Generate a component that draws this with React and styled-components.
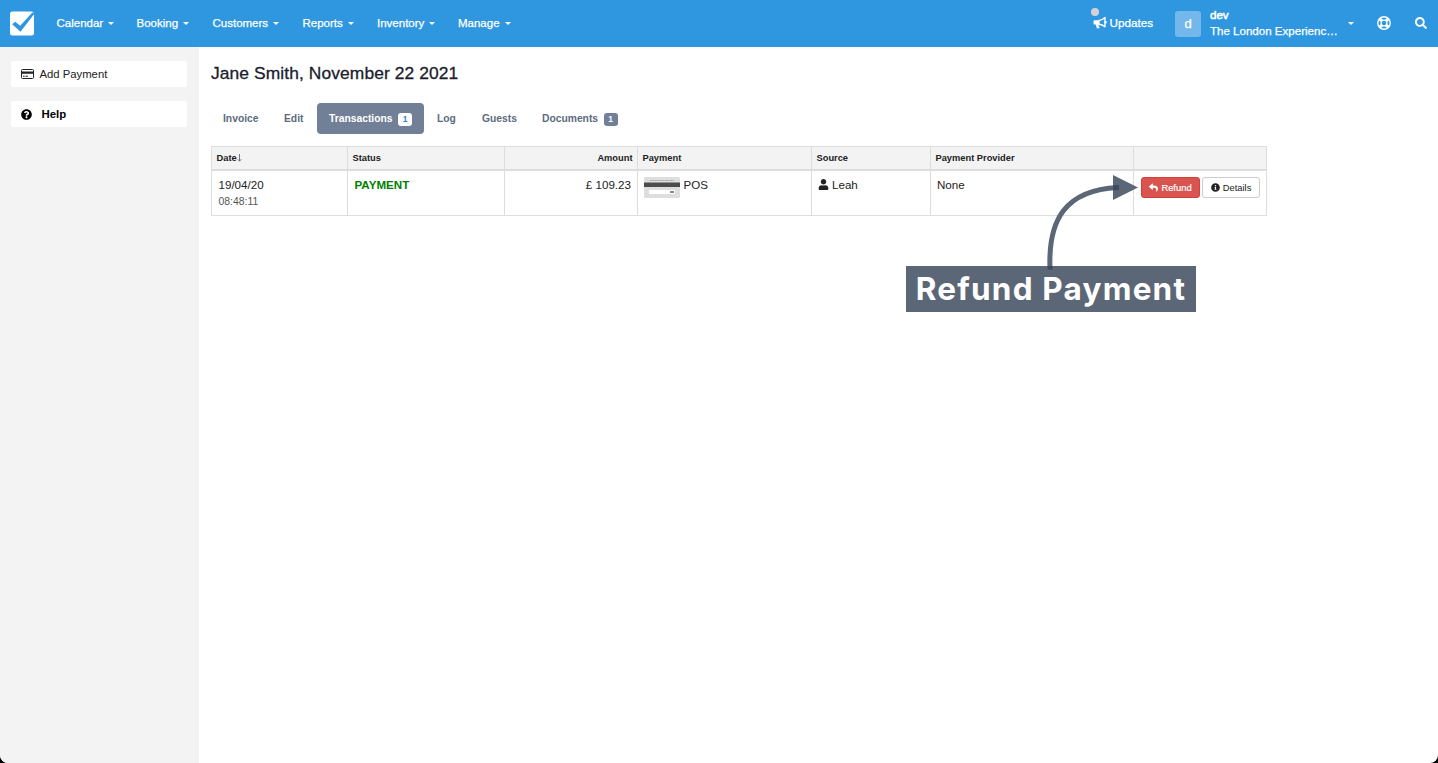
import React from "react";
import styled, { createGlobalStyle } from "styled-components";
import {
  FaInfoCircle,
  FaQuestionCircle,
  FaReply,
  FaSearch,
  FaUser,
} from "react-icons/fa";

const GlobalStyle = createGlobalStyle`
  * {
    box-sizing: border-box;
  }
  body {
    margin: 0;
    background: #000;
    color: #222;
    font-family: "Liberation Sans", Arial, sans-serif;
    font-size: 11.4px;
  }
  svg {
    display: block;
    flex-shrink: 0;
  }
`;

const Page = styled.div`
  position: relative;
  display: flex;
  flex-direction: column;
  width: 100%;
  height: 100vh;
  overflow: hidden;
  background: #fff;
  border-radius: 0 0 8px 8px;
`;

const Navbar = styled.header`
  display: flex;
  align-items: center;
  height: 47px;
  padding: 0 11px 0 10px;
  background: #2f97e0;
  color: #fff;
  -webkit-text-stroke: 0.25px #fff;
`;

const Logo = styled.svg`
  width: 25px;
  height: 25px;
`;

const Menu = styled.nav`
  display: flex;
  margin-left: 21.5px;
  padding-bottom: 2px;
`;

const MenuItem = styled.a`
  display: flex;
  align-items: center;
  width: ${(props) => props.$width}px;
  font-size: 11.5px;
  line-height: 16px;
`;

const Caret = styled.span`
  margin-left: ${(props) => props.$gap || 5}px;
  margin-top: ${(props) => (props.$gap ? 0 : 2)}px;
  border: 3px solid transparent;
  border-top-color: #fff;
  border-bottom: 0;
`;

const NavRight = styled.div`
  display: flex;
  align-items: center;
  margin-left: auto;
`;

const Updates = styled.a`
  position: relative;
  display: flex;
  align-items: center;
  gap: 2.5px;
  padding-bottom: 2px;
  font-size: 11.7px;
`;

const UpdateDot = styled.span`
  position: absolute;
  top: -8px;
  left: -2px;
  width: 8px;
  height: 8px;
  border-radius: 50%;
  background: #d2d2d4;
`;

const Avatar = styled.span`
  width: 26px;
  height: 26px;
  margin-left: 22px;
  border-radius: 3px;
  background: #74b8eb;
  font-size: 13px;
  line-height: 26px;
  text-align: center;
`;

const Account = styled.div`
  display: flex;
  flex-direction: column;
  width: 128px;
  margin-left: 9px;
  padding-bottom: 2px;
  font-size: 11.55px;
  line-height: 16px;
  white-space: nowrap;
`;

const UserName = styled.span`
  -webkit-text-stroke: 0.55px #fff;
`;

const LifeRingSlot = styled.span`
  margin: 0 0 1px 23px;
`;

const SearchSlot = styled.span`
  margin: 0 0 2px 24px;
`;

const Body = styled.div`
  display: flex;
  flex: 1;
`;

const Sidebar = styled.aside`
  display: flex;
  flex-direction: column;
  gap: 14px;
  width: 199px;
  padding: 14px 12px 0 11px;
  background: #f3f3f3;
`;

const SideButton = styled.a`
  display: flex;
  align-items: center;
  gap: ${(props) => (props.$bold ? 9.5 : 5.5)}px;
  height: 26px;
  padding-left: 10px;
  border-radius: 3px;
  background: #fff;
  color: ${(props) => (props.$bold ? "#000" : "#222")};
  font-size: ${(props) => (props.$bold ? 11.4 : 11.3)}px;
  font-weight: ${(props) => (props.$bold ? "bold" : "normal")};
`;

const Main = styled.main`
  flex: 1;
  padding: 14px 0 0 12px;
`;

const Title = styled.h1`
  margin: 0;
  color: #1a202c;
  font-size: 17.4px;
  font-weight: normal;
  line-height: 24px;
  letter-spacing: 0.1px;
  -webkit-text-stroke: 0.3px #1a202c;
`;

const Tabs = styled.div`
  display: flex;
  gap: 1px;
  margin-top: 18px;
`;

const Tab = styled.a`
  display: flex;
  align-items: center;
  width: ${(props) => props.$width}px;
  height: 31px;
  padding-left: 12px;
  border-radius: 4px;
  background: ${(props) => (props.$active ? "#718096" : "transparent")};
  color: ${(props) => (props.$active ? "#fff" : "#5c6b80")};
  font-size: 10.3px;
  font-weight: bold;
`;

const Badge = styled.span`
  width: 14px;
  height: 13px;
  margin: 2px 0 0 5.5px;
  border-radius: 3px;
  background: ${(props) => (props.$active ? "#fff" : "#718096")};
  color: ${(props) => (props.$active ? "#3182ce" : "#fff")};
  font-size: 8.4px;
  line-height: 13px;
  text-align: center;
`;

const Table = styled.div`
  display: grid;
  grid-template-columns: 136px 157px 133px 174px 119px 203px 133px;
  width: 1056px;
  margin-top: 12px;
  border-right: 1px solid #ddd;
`;

const HeadCell = styled.div`
  height: 25px;
  padding: 0 4.5px;
  border: solid #ddd;
  border-width: 1px 0 2px 1px;
  background: #f3f3f3;
  color: #222;
  font-size: 9.3px;
  font-weight: bold;
  line-height: 22px;
  text-align: ${(props) => props.$align || "left"};
`;

const SortArrow = styled.svg`
  display: inline-block;
  width: 5px;
  height: 8px;
  vertical-align: -1px;
`;

const Cell = styled.div`
  display: flex;
  align-items: flex-start;
  justify-content: ${(props) => (props.$align === "right" ? "flex-end" : "flex-start")};
  gap: ${(props) => props.$gap || 0}px;
  height: 45px;
  padding: 6px 6px 0 ${(props) => props.$indent || 6}px;
  border: solid #ddd;
  border-width: 0 0 1px 1px;
  font-size: 11.6px;
  line-height: 16px;
`;

const Time = styled.div`
  color: #555;
  font-size: 10.4px;
  line-height: 17px;
`;

const Status = styled.strong`
  color: #008000;
`;

const UserSlot = styled.span`
  margin-top: 2px;
`;

const Button = styled.button`
  display: flex;
  align-items: center;
  justify-content: center;
  gap: 3px;
  width: ${(props) => (props.$danger ? 59 : 58)}px;
  height: 21px;
  padding: 0;
  border: 1px solid ${(props) => (props.$danger ? "#d43f3a" : "#ccc")};
  border-radius: 3px;
  background: ${(props) => (props.$danger ? "#d9534f" : "#fff")};
  color: ${(props) => (props.$danger ? "#fff" : "#222")};
  font-family: inherit;
  font-size: 9.4px;
  -webkit-text-stroke: ${(props) => (props.$danger ? "0.2px #fff" : "0")};
`;

const Callout = styled.div`
  position: absolute;
  top: 266px;
  left: 906px;
  width: 290px;
  height: 46px;
  background: #5b6777;
  color: #fff;
  font-family: Inter, sans-serif;
  font-size: 31.5px;
  font-weight: 700;
  line-height: 45px;
  letter-spacing: 1.2px;
  text-align: center;
  white-space: nowrap;
`;

const CalloutArrow = styled.svg`
  position: absolute;
  top: 170px;
  left: 1040px;
  width: 105px;
  height: 102px;
`;

const menuItems = [
  { label: "Calendar", width: 80 },
  { label: "Booking", width: 76 },
  { label: "Customers", width: 90 },
  { label: "Reports", width: 74.5 },
  { label: "Inventory", width: 81 },
  { label: "Manage", width: 70 },
];

const tabs = [
  { label: "Invoice", width: 60 },
  { label: "Edit", width: 44 },
  { label: "Transactions", width: 107, count: 1, active: true },
  { label: "Log", width: 44 },
  { label: "Guests", width: 59 },
  { label: "Documents", width: 100, count: 1 },
];

function BullhornIcon() {
  return (
    <svg width="14" height="13" viewBox="0 0 14 13">
      <path d="M1.500 4.200H6v4.300H1.500Q.5 8.500.5 7.500V5.200Q.5 4.200 1.500 4.200zM2.700 8.300h2.600l.4 2 1.100 1.500Q5 13 3.700 12z" fill="currentColor" />
      <path d="M6 4.500Q9.300 4.300 12 1.600v9.200Q9.300 8.300 6 8.200z" fill="none" stroke="currentColor" strokeWidth="1.400" strokeLinejoin="round" />
      <circle cx="12.600" cy="6.200" r="1.200" fill="currentColor" />
    </svg>
  );
}

function LifeRingIcon() {
  return (
    <svg width="14" height="14" viewBox="0 0 14 14" fill="none" stroke="currentColor">
      <circle cx="7" cy="7" r="6.2" strokeWidth="1.4" />
      <circle cx="7" cy="7" r="2.9" strokeWidth="1.3" />
      <path d="M2.6 2.6l2.3 2.3M9.1 9.1l2.3 2.3M11.4 2.6L9.1 4.9M4.9 9.1l-2.3 2.3" strokeWidth="3" />
    </svg>
  );
}

function CreditCardIcon() {
  return (
    <svg width="13" height="10" viewBox="0 0 13 10">
      <rect x="0.5" y="0.5" width="12" height="9" rx="1" fill="none" stroke="currentColor" />
      <path d="M0 2.5h13v2.3H0zM2 6.8h1.7v1H2zM4.5 6.8h2.5v1H4.5z" fill="currentColor" />
    </svg>
  );
}

function CardImage() {
  return (
    <svg width="36" height="21" viewBox="0 0 36 21">
      <rect width="36" height="21" rx="1.5" fill="#dedede" />
      <path d="M6 3.5h24" stroke="#aaa" strokeDasharray="2 0.5" />
      <rect y="5.5" width="36" height="4.5" fill="#4a4d4b" />
      <rect x="5" y="13" width="26" height="4" fill="#fff" />
      <rect x="26" y="14" width="4" height="2" fill="#888" />
    </svg>
  );
}

function App() {
  return (
    <>
      <GlobalStyle />
      <Page>
        <Navbar>
          <Logo viewBox="0 0 25 25">
            <rect y="0.5" width="24" height="24" rx="2.5" fill="#fff" />
            <path d="M2.2 13.3 5.2 10.7l5 4L22.3 1.5l1.7.3v1.4L10.5 20.8z" fill="#2f97e0" />
          </Logo>
          <Menu>
            {menuItems.map((item) => (
              <MenuItem key={item.label} $width={item.width}>
                {item.label}
                <Caret />
              </MenuItem>
            ))}
          </Menu>
          <NavRight>
            <Updates>
              <UpdateDot />
              <BullhornIcon />
              Updates
            </Updates>
            <Avatar>d</Avatar>
            <Account>
              <UserName>dev</UserName>
              <span>The London Experienc…</span>
            </Account>
            <Caret $gap={10} />
            <LifeRingSlot>
              <LifeRingIcon />
            </LifeRingSlot>
            <SearchSlot>
              <FaSearch size={12} />
            </SearchSlot>
          </NavRight>
        </Navbar>
        <Body>
          <Sidebar>
            <SideButton>
              <CreditCardIcon />
              Add Payment
            </SideButton>
            <SideButton $bold>
              <FaQuestionCircle size={11} />
              Help
            </SideButton>
          </Sidebar>
          <Main>
            <Title>Jane Smith, November 22 2021</Title>
            <Tabs>
              {tabs.map((tab) => (
                <Tab key={tab.label} $width={tab.width} $active={tab.active}>
                  {tab.label}
                  {tab.count && <Badge $active={tab.active}>{tab.count}</Badge>}
                </Tab>
              ))}
            </Tabs>
            <Table>
              <HeadCell>
                Date
                <SortArrow viewBox="0 0 5 8">
                  <path d="M2.5 0v7M.7 5.2l1.8 2 1.8-2" fill="none" stroke="#777" />
                </SortArrow>
              </HeadCell>
              <HeadCell>Status</HeadCell>
              <HeadCell $align="right">Amount</HeadCell>
              <HeadCell>Payment</HeadCell>
              <HeadCell>Source</HeadCell>
              <HeadCell>Payment Provider</HeadCell>
              <HeadCell />
              <Cell $indent={6.5}>
                <div>
                  19/04/20
                  <Time>08:48:11</Time>
                </div>
              </Cell>
              <Cell $indent={6.5}>
                <Status>PAYMENT</Status>
              </Cell>
              <Cell $align="right">£ 109.23</Cell>
              <Cell $gap={3.5}>
                <CardImage />
                POS
              </Cell>
              <Cell $gap={3}>
                <UserSlot>
                  <FaUser size={11} />
                </UserSlot>
                Leah
              </Cell>
              <Cell>None</Cell>
              <Cell $gap={2} $indent={7}>
                <Button $danger>
                  <FaReply size={9} />
                  Refund
                </Button>
                <Button>
                  <FaInfoCircle size={9} />
                  Details
                </Button>
              </Cell>
            </Table>
          </Main>
        </Body>
        <Callout>Refund Payment</Callout>
        <CalloutArrow viewBox="0 0 105 102">
          <path
            d="M10 99C8 50 25 20 78 17.5"
            fill="none"
            stroke="#5b6777"
            strokeWidth="5"
          />
          <path d="M73 5v25l25-12.5z" fill="#5b6777" />
          <path d="M73 15.2l6-.2v5l-6 .2zM7.5 96h5v3.5h-5z" fill="#3c4a5e" />
        </CalloutArrow>
      </Page>
    </>
  );
}

export default App;
